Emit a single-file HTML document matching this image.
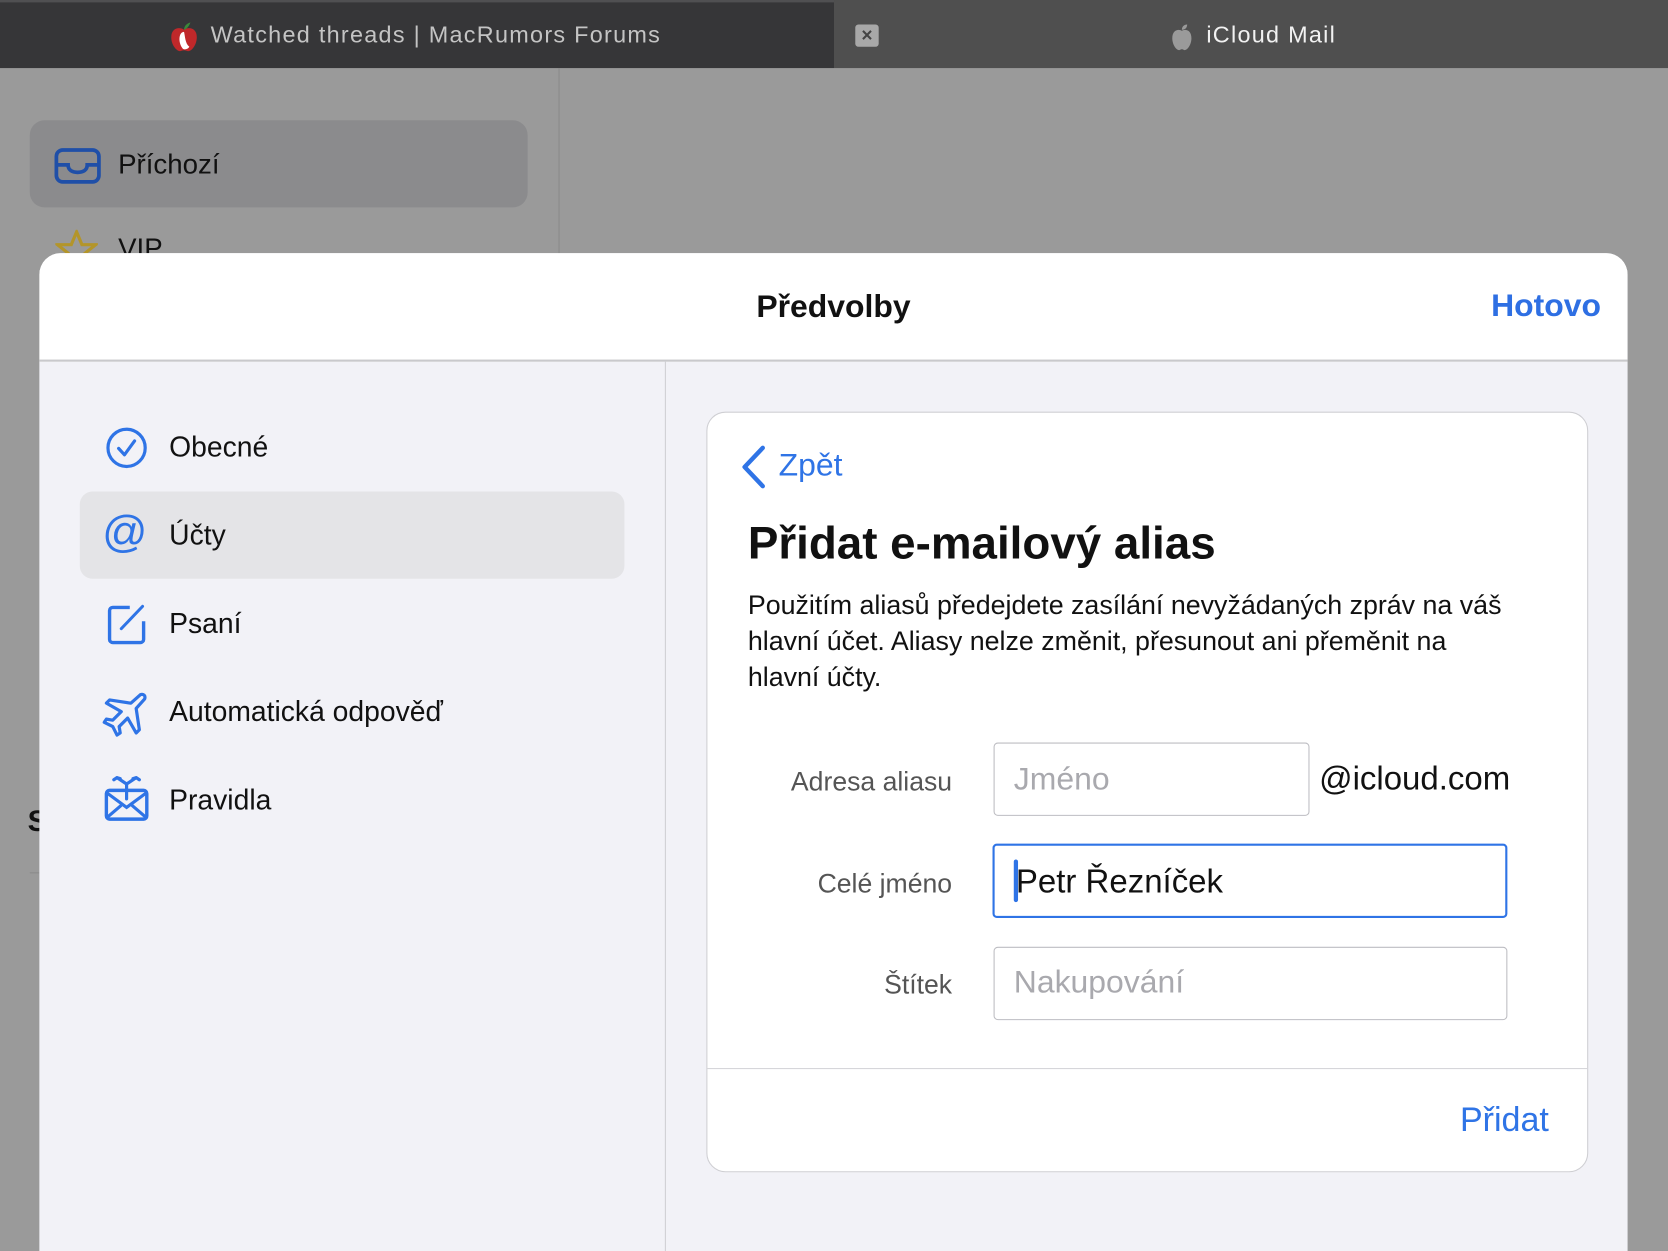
<!DOCTYPE html>
<html><head><meta charset="utf-8"><style>
*{margin:0;padding:0;box-sizing:border-box}
html,body{width:1668px;height:1251px;overflow:hidden;background:#999}
body{font-family:"Liberation Sans",sans-serif}
#w{position:absolute;left:0;top:0;width:1568px;height:1176px;transform:scale(1.06378);transform-origin:0 0;background:#9a9a9a;overflow:hidden}
.a{position:absolute;white-space:nowrap}
.m{font-size:26.6px;color:#111}
</style></head><body><div id="w">
<div class="a" style="left:0;top:0;width:1568px;height:2px;background:#505052"></div>
<div class="a" style="left:0;top:2px;width:784px;height:62px;background:#363638"></div>
<div class="a" style="left:784px;top:0;width:784px;height:64px;background:#4f4f4f"></div>
<svg class="a" style="left:158px;top:20px" width="30" height="30" viewBox="0 0 30 30"><path d="M15 8c-4-3-12-2-12 7 0 8 6 14 9 13 2-1 4-1 6 0 4 1 9-6 9-13 0-9-8-10-12-7z" fill="#c0282a"/><path d="M15 10c-5 0-6 10-1 16 2 1 5 0 6-2-4-3-4-10-5-14z" fill="#fff"/><path d="M15 8c0-4 3-6 6-7-1 3-3 6-6 7z" fill="#3a8a3a"/></svg>
<div class="a" style="left:198px;top:20px;font-size:22px;color:#c4c4c4;letter-spacing:1.2px">Watched threads | MacRumors Forums</div>
<div class="a" style="left:804px;top:23px;width:22px;height:21px;background:#a8a8a8;border-radius:3px;color:#444;font-size:18px;text-align:center;line-height:21px;font-weight:bold">×</div>
<svg class="a" style="left:1100px;top:22px" width="22" height="26" viewBox="0 0 22 26"><path d="M11 7c-3-2-9-1-9 7 0 6 4 12 7 11 1-1 3-1 4 0 3 1 7-5 7-11 0-8-6-9-9-7z" fill="#9a9a9a"/><path d="M11 6c0-3 2-5 5-5 0 3-2 5-5 5z" fill="#9a9a9a"/></svg>
<div class="a" style="left:1134px;top:20px;font-size:22px;color:#f2f2f2;letter-spacing:1.2px">iCloud Mail</div>
<div class="a" style="left:525px;top:64px;width:1px;height:180px;background:#8a8a8a"></div>
<div class="a" style="left:28px;top:113px;width:468px;height:82px;background:#8b8b8d;border-radius:14px"></div>
<svg class="a" style="left:51px;top:139px" width="44" height="34" viewBox="0 0 44 34"><rect x="2" y="2" width="40" height="30" rx="6" fill="none" stroke="#1f4fa8" stroke-width="3.5"/><path d="M2 16h11c0 5 4 7 9 7s9-2 9-7h11" fill="none" stroke="#1f4fa8" stroke-width="3.5"/></svg>
<div class="a" style="left:111px;top:139px;font-size:26px;color:#111">Příchozí</div>
<svg class="a" style="left:52px;top:216px" width="40" height="30" viewBox="0 0 40 30"><path d="M20 2l5 12h13l-10 8 4 12-12-7-12 7 4-12L2 14h13z" fill="none" stroke="#b3952a" stroke-width="3"/></svg>
<div class="a" style="left:111px;top:218px;font-size:26px;color:#111">VIP</div>
<div class="a" style="left:26px;top:756px;font-size:28px;color:#111;font-weight:bold">S</div>
<div class="a" style="left:28px;top:820px;width:12px;height:1px;background:#8a8a8a"></div>
<div class="a" style="left:37px;top:238px;width:1493px;height:960px;background:#f2f2f7;border-radius:20px 20px 0 0;overflow:hidden">
 <div class="a" style="left:0;top:0;width:1493px;height:102px;background:#fff;border-bottom:2px solid #c9c9cc"></div>
 <div class="a" style="left:0;top:34px;width:1493px;text-align:center;font-size:30px;font-weight:bold;color:#111">Předvolby</div>
 <div class="a" style="right:25px;top:33px;font-size:30px;font-weight:bold;color:#2e6fe3">Hotovo</div>
 <div class="a" style="left:588px;top:102px;width:1px;height:860px;background:#cfcfd3"></div>
</div>
<div class="a" style="left:75px;top:462px;width:512px;height:82px;background:#e4e4e7;border-radius:12px"></div>
<svg class="a" style="left:99px;top:401px" width="40" height="40" viewBox="0 0 40 40"><circle cx="20" cy="20" r="17.5" fill="none" stroke="#2f74e6" stroke-width="3"/><path d="M12.5 20.5l5.5 6 9.5-13" fill="none" stroke="#2f74e6" stroke-width="3" stroke-linecap="round" stroke-linejoin="round"/></svg>
<div class="a m" style="left:159px;top:405px">Obecné</div>
<div class="a" style="left:96px;top:476px;font-size:42px;color:#2f74e6;line-height:48px">@</div>
<div class="a m" style="left:159px;top:488px">Účty</div>
<svg class="a" style="left:100px;top:566px" width="40" height="40" viewBox="0 0 40 40"><path d="M22 5H6a3 3 0 0 0-3 3v27a3 3 0 0 0 3 3h26a3 3 0 0 0 3-3V18" fill="none" stroke="#2f74e6" stroke-width="3.2"/><path d="M14 25l20-21" stroke="#2f74e6" stroke-width="2.8" stroke-linecap="round"/></svg>
<div class="a m" style="left:159px;top:571px">Psaní</div>
<svg class="a" style="left:96px;top:650px" width="44" height="44" viewBox="0 0 44 44"><path d="M36 3c3-1 5 1 4 4l-8 9 3 20-3 3-8-14-8 8 1 6-3 2-4-8-8-4 2-3 6 1 8-8L4 11l3-3 20 3z" fill="none" stroke="#2f74e6" stroke-width="3" stroke-linejoin="round"/></svg>
<div class="a m" style="left:159px;top:654px">Automatická odpověď</div>
<svg class="a" style="left:97px;top:727px" width="44" height="46" viewBox="0 0 44 46"><rect x="3" y="16" width="38" height="27" rx="3" fill="none" stroke="#2f74e6" stroke-width="3.2"/><path d="M3 18l19 14 19-14M3 42l14-12M41 42L27 30" fill="none" stroke="#2f74e6" stroke-width="3"/><path d="M22 24V10M22 10l-9-6M22 10l9-6M13 4l-3 2M13 4l3 1M31 4l3 2M31 4l-3 1" fill="none" stroke="#2f74e6" stroke-width="3" stroke-linecap="round"/></svg>
<div class="a m" style="left:159px;top:737px">Pravidla</div>
<div class="a" style="left:664px;top:387px;width:829px;height:715px;background:#fff;border:1px solid #cfcfd3;border-radius:18px"></div>
<svg class="a" style="left:695px;top:418px" width="28" height="42" viewBox="0 0 28 42"><path d="M22 3L5 21l17 18" fill="none" stroke="#2f74e6" stroke-width="4.2" stroke-linecap="round" stroke-linejoin="round"/></svg>
<div class="a" style="left:732px;top:421px;font-size:30px;color:#2f74e6">Zpět</div>
<div class="a" style="left:703px;top:487px;font-size:43px;font-weight:bold;color:#111">Přidat e-mailový alias</div>
<div class="a" style="left:703px;top:552px;font-size:25.2px;line-height:34px;color:#111">Použitím aliasů předejdete zasílání nevyžádaných zpráv na váš<br>hlavní účet. Aliasy nelze změnit, přesunout ani přeměnit na<br>hlavní účty.</div>
<div class="a" style="right:673px;top:721px;font-size:25px;color:#555">Adresa aliasu</div>
<div class="a" style="right:673px;top:817px;font-size:25px;color:#555">Celé jméno</div>
<div class="a" style="right:673px;top:912px;font-size:25px;color:#555">Štítek</div>
<div class="a" style="left:934px;top:698px;width:297px;height:69px;border:1.5px solid #bdbdc2;border-radius:4px"></div>
<div class="a" style="left:953px;top:716px;font-size:30px;color:#a9a9ae">Jméno</div>
<div class="a" style="left:1240px;top:714px;font-size:31px;color:#111">@icloud.com</div>
<div class="a" style="left:933px;top:793px;width:484px;height:70px;border:2.5px solid #2f74e6;border-radius:4px"></div>
<div class="a" style="left:953px;top:808px;width:4px;height:40px;background:#2f74e6;border-radius:2px"></div>
<div class="a" style="left:955px;top:811px;font-size:31px;color:#111">Petr Řezníček</div>
<div class="a" style="left:934px;top:890px;width:483px;height:69px;border:1.5px solid #bdbdc2;border-radius:4px"></div>
<div class="a" style="left:953px;top:907px;font-size:30px;color:#a9a9ae">Nakupování</div>
<div class="a" style="left:665px;top:1004px;width:827px;height:1px;background:#d5d5d9"></div>
<div class="a" style="right:112px;top:1034px;font-size:32px;color:#2f74e6">Přidat</div>
</div></body></html>
